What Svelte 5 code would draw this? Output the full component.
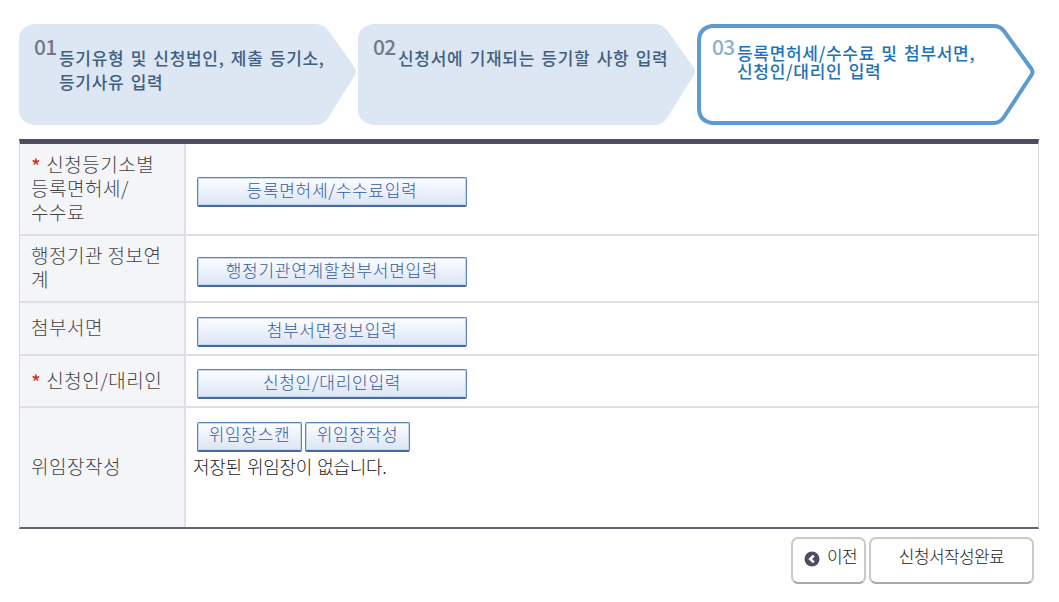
<script lang="ts">
  const steps = [
    { no: '01', lines: ['등기유형 및 신청법인, 제출 등기소,', '등기사유 입력'], current: false },
    { no: '02', lines: ['신청서에 기재되는 등기할 사항 입력'], current: false },
    { no: '03', lines: ['등록면허세/수수료 및 첨부서면,', '신청인/대리인 입력'], current: true },
  ];

  const rows = [
    { label: ['신청등기소별', '등록면허세/', '수수료'], required: true, buttons: ['등록면허세/수수료입력'] },
    { label: ['행정기관 정보연', '계'], required: false, buttons: ['행정기관연계할첨부서면입력'] },
    { label: ['첨부서면'], required: false, buttons: ['첨부서면정보입력'] },
    { label: ['신청인/대리인'], required: true, buttons: ['신청인/대리인입력'] },
    {
      label: ['위임장작성'],
      required: false,
      buttons: ['위임장스캔', '위임장작성'],
      note: '저장된 위임장이 없습니다.',
    },
  ];
</script>

<main>
  <ol class="steps">
    {#each steps as step}
      <li class:current={step.current}>
        <svg class="shape" viewBox="0 0 338 101" aria-hidden="true">
          {#if step.current}
            <path d="M15 2H297Q303 2 307 7L334.500 45Q336.500 48 334.500 51L307 93Q303 99 297 99H15Q2 97 2 84V17Q2 4 15 2Z" />
          {:else}
            <path d="M15 0H297Q304 0 309 6L336 44Q338 47.500 336 51L309 94Q304 101 297 101H15Q0 98 0 86V15Q0 3 15 0Z" />
          {/if}
        </svg>
        <span class="no">{step.no}</span>
        <div class="title">
          {#each step.lines as line}
            <div>{line}</div>
          {/each}
        </div>
      </li>
    {/each}
  </ol>

  <div class="form">
    {#each rows as row}
      <div class="row">
        <div class="label">
          {#each row.label as line, i}
            <div>{#if row.required && i === 0}<em>*</em>{/if}{line}</div>
          {/each}
        </div>
        <div class="value">
          <div class="buttons">
            {#each row.buttons as text}
              <button type="button" class:small={row.buttons.length > 1}>{text}</button>
            {/each}
          </div>
          {#if row.note}
            <p>{row.note}</p>
          {/if}
        </div>
      </div>
    {/each}
  </div>

  <footer>
    <button type="button" class="prev">
      <svg viewBox="0 0 16 16" aria-hidden="true">
        <circle cx="8" cy="8" r="7.500" />
        <path d="M9.800 4.600L6.200 8L9.800 11.400" />
      </svg>
      이전
    </button>
    <button type="button" class="done">신청서작성완료</button>
  </footer>
</main>

<style>
  :global(body) {
    margin: 0;
    background: #fefefe;
  }

  main {
    box-sizing: border-box;
    width: 1059px;
    height: 602px;
    padding: 24px 20px 0 19px;
    overflow: hidden;
    font-family: 'Noto Sans CJK KR', sans-serif;
    font-weight: 300;
    white-space: nowrap;
  }

  .steps {
    list-style: none;
    margin: 0 0 14px;
    padding: 0;
    display: flex;
    gap: 1px;
  }

  li {
    position: relative;
    box-sizing: border-box;
    width: 338px;
    height: 101px;
    padding: 10px 0 0 15px;
    display: flex;
    color: #41607f;
  }

  .shape {
    position: absolute;
    inset: 0;
    z-index: -1;
    width: 338px;
    height: 101px;
    fill: #dce7f3;
  }

  .current .shape {
    fill: #fefefe;
    stroke: #5b9bd0;
    stroke-width: 4;
  }

  .no {
    width: 25px;
    font-size: 21px;
    line-height: 24px;
    font-weight: 500;
    letter-spacing: -0.8px;
    color: #74788a;
  }

  .title {
    padding-top: 12px;
    font-size: 17px;
    line-height: 24px;
    font-weight: 500;
    letter-spacing: 0.7px;
    word-spacing: 1.8px;
  }

  .current .no {
    color: #8cb1d0;
  }

  .current .title {
    padding-top: 10px;
    line-height: 18px;
    color: #1d72b8;
  }

  .form {
    box-sizing: border-box;
    height: 390px;
    border: 1px solid #d9d9dd;
    border-top: 5px solid #504b5e;
    border-bottom: 2px solid #66636f;
    display: grid;
    grid-template-rows: 92px 67px 53px 52px 1fr;
  }

  .row {
    display: grid;
    grid-template-columns: 166px 1fr;
    border-bottom: 2px solid #e0e0e3;
  }

  .row:last-child {
    border-bottom: 0;
  }

  .label {
    display: flex;
    flex-direction: column;
    justify-content: center;
    padding: 0 0 3px 11px;
    border-right: 2px solid #e0e0e3;
    background: #f4f5f8;
    color: #444;
    font-size: 19px;
    line-height: 24px;
    letter-spacing: 0.5px;
  }

  em {
    display: inline-block;
    height: 20px;
    margin-right: 5px;
    color: #d22;
    font-size: 21px;
    font-style: normal;
    font-weight: 400;
    line-height: 24px;
    vertical-align: -3px;
  }

  .value {
    display: flex;
    flex-direction: column;
    justify-content: center;
    padding: 6px 0 0 11px;
  }

  .row:last-child .value {
    justify-content: flex-start;
    padding-top: 14px;
  }

  .buttons {
    display: flex;
    gap: 3px;
  }

  button {
    box-sizing: border-box;
    padding: 0;
    font: inherit;
    white-space: nowrap;
  }

  .buttons button {
    width: 270px;
    height: 30px;
    padding-bottom: 3px;
    border: 1px solid #5b83b9;
    border-bottom: 2px solid #47699f;
    border-radius: 2px;
    background: linear-gradient(#fdfdff, #dbe5f4);
    box-shadow: inset 0 0 0 1px #c5d7ee;
    color: #345c9e;
    font-size: 17px;
    line-height: 22px;
    letter-spacing: 0.7px;
  }

  .buttons .small {
    width: 105px;
    padding-bottom: 7px;
  }

  p {
    margin: 2px 0 0 -4px;
    color: #222;
    font-size: 18px;
    line-height: 24px;
    letter-spacing: -0.3px;
    word-spacing: 1.5px;
  }

  footer {
    display: flex;
    justify-content: flex-end;
    gap: 3px;
    padding: 8px 5px 0 0;
  }

  footer button {
    height: 47px;
    padding-bottom: 10px;
    border: 2px solid #c9c9c9;
    border-bottom-color: #a9a9a9;
    border-radius: 7px;
    background: #fefefe;
    color: #222;
    font-size: 17px;
    letter-spacing: -0.6px;
  }

  .prev {
    width: 75px;
    padding-left: 11px;
    display: flex;
    align-items: center;
    gap: 7px;
  }

  .prev svg {
    width: 16px;
    height: 16px;
    margin-top: 7px;
    fill: #4f4b60;
  }

  .prev path {
    fill: none;
    stroke: #fff;
    stroke-width: 2.6;
  }

  .done {
    width: 165px;
  }
</style>
